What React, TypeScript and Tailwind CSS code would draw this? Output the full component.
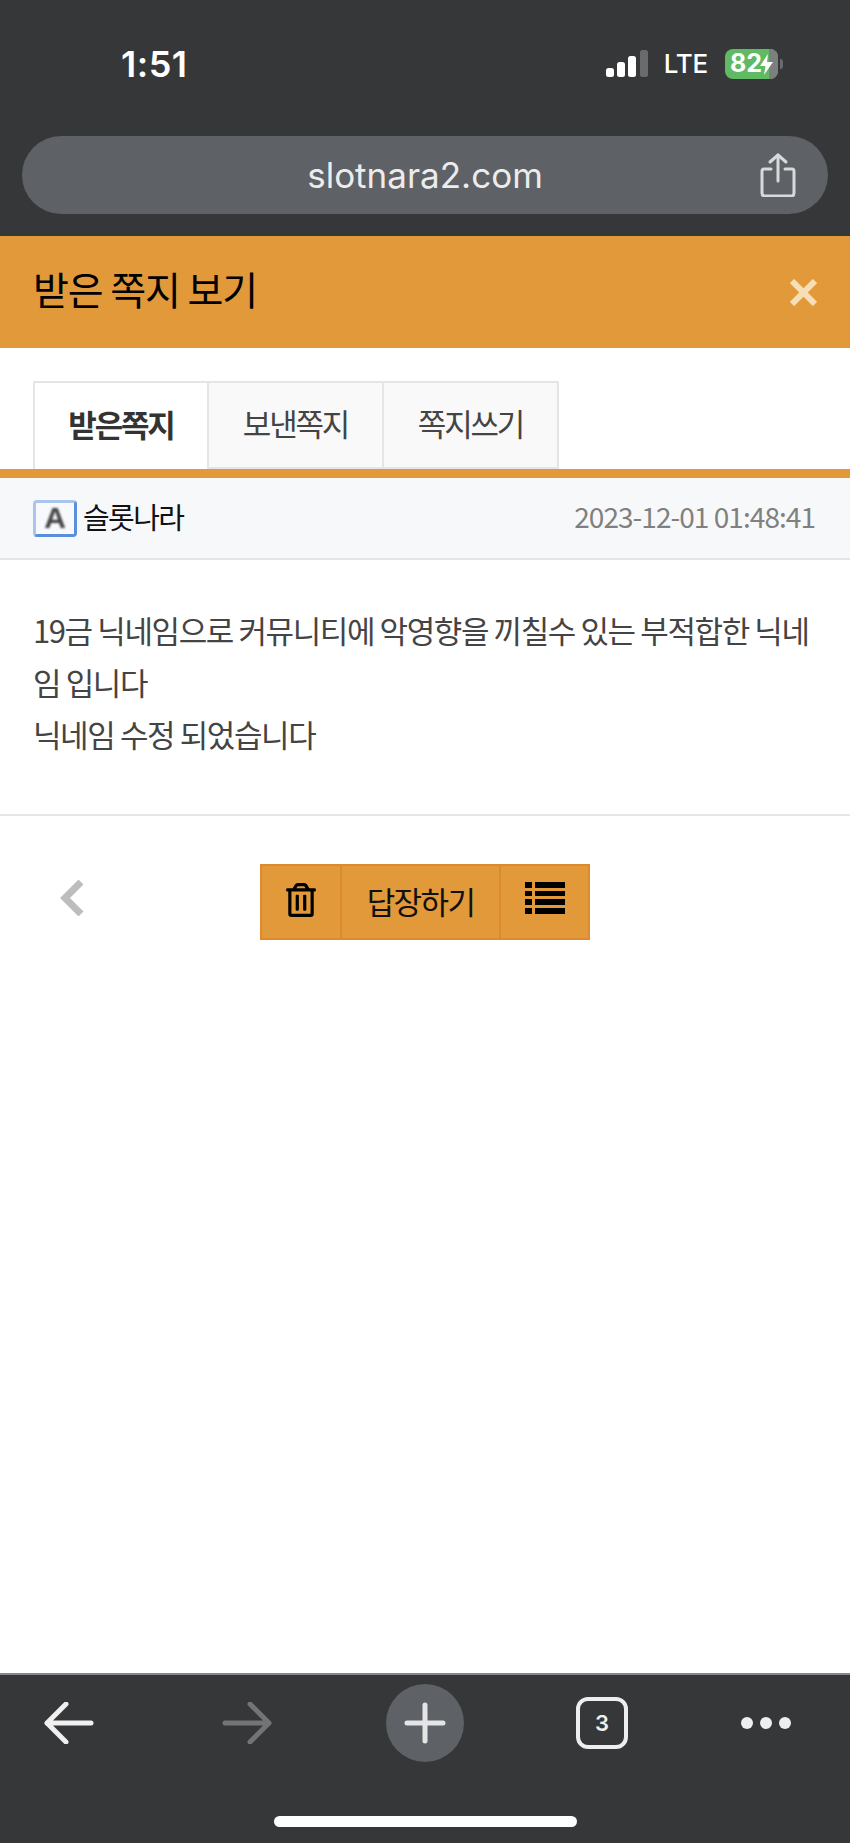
import React from 'react';
import { FaRegTrashAlt } from 'react-icons/fa';

const font = "font-['Noto_Sans_CJK_KR','Noto_Sans',sans-serif]";

const tabs = ['받은쪽지', '보낸쪽지', '쪽지쓰기'];

const StatusBar = () => (
  <div className="h-[136px] pl-[121px] pr-[67px] pb-[9px] flex items-center justify-between text-white font-['Inter',sans-serif]">
    <span className="text-[36px] font-semibold tracking-[0.5px] leading-none">1:51</span>
    <div className="flex items-center">
      <svg width="42" height="28" viewBox="0 0 42 28">
        <rect x="0" y="18" width="8" height="9" rx="2.5" fill="#fff" />
        <rect x="11" y="12" width="8" height="15" rx="2.5" fill="#fff" />
        <rect x="22" y="6" width="8" height="21" rx="2.5" fill="#fff" />
        <rect x="34" y="0" width="8" height="27" rx="2.5" fill="#6a6b6e" />
      </svg>
      <span className="ml-[16px] text-[26px] font-medium leading-none tracking-[-0.2px]">LTE</span>
      <div className="ml-[17px] relative w-[53px] h-[30px] rounded-[8px] bg-[#5fba63] overflow-hidden flex items-center pl-[5px]">
        <span className="text-[25px] font-bold leading-none">82</span>
        <div className="absolute right-0 top-0 bottom-0 w-[9px] bg-[#7d7e80]" />
        <svg className="absolute right-[5px] top-[5px]" width="13" height="21" viewBox="0 0 13 21">
          <path d="M8 0 L0 12 L5.5 12 L4 21 L13 8 L7 8 Z" fill="#fff" />
        </svg>
      </div>
      <div className="ml-[2px] w-[3px] h-[10px] rounded-r-full bg-[#6a6b6e]" />
    </div>
  </div>
);

const UrlBar = () => (
  <div className="h-[100px] px-[22px]">
    <div className="relative h-[78px] rounded-[39px] bg-[#5e6165] flex items-center justify-center">
      <span className="text-[35px] text-[#ececec] font-['Inter',sans-serif] leading-none">slotnara2.com</span>
      <svg className="absolute right-[32px] top-[17px]" width="36" height="44" viewBox="0 0 36 44" fill="none" stroke="#d8d9da" strokeWidth="3" strokeLinecap="round" strokeLinejoin="round">
        <path d="M18 2 V28" />
        <path d="M10 9 L18 2 L26 9" />
        <path d="M11 16 H4 Q2 16 2 18 V40 Q2 43 5 43 H31 Q34 43 34 40 V18 Q34 16 32 16 H25" />
      </svg>
    </div>
  </div>
);

const BottomBar = () => (
  <div className="mt-auto h-[170px] bg-[#363739] border-t-2 border-[#85868a]">
    <div className="h-[96px] pl-[44px] flex items-center">
      <svg width="50" height="42" viewBox="0 0 50 42" fill="none" stroke="#f0f0f1" strokeWidth="5" strokeLinecap="round" strokeLinejoin="round">
        <path d="M47 21 H3 M22 2 L3 21 L22 40" />
      </svg>
      <svg className="ml-[128px]" width="50" height="42" viewBox="0 0 50 42" fill="none" stroke="#737476" strokeWidth="5" strokeLinecap="round" strokeLinejoin="round">
        <path d="M3 21 H47 M28 2 L47 21 L28 40" />
      </svg>
      <div className="ml-[114px] w-[78px] h-[78px] rounded-full bg-[#5e6165] flex items-center justify-center">
        <svg width="42" height="42" viewBox="0 0 42 42" stroke="#e4e5e6" strokeWidth="5" strokeLinecap="round">
          <path d="M21 3 V39 M3 21 H39" />
        </svg>
      </div>
      <div className="ml-[112px] w-[52px] h-[52px] rounded-[12px] border-[4px] border-[#eeeeef] flex items-center justify-center text-[#eeeeef] text-[22px] font-semibold font-['Inter',sans-serif] leading-none">3</div>
      <div className="ml-[113px] flex gap-[7px]">
        <span className="w-[12px] h-[12px] rounded-full bg-[#eeeeef]" />
        <span className="w-[12px] h-[12px] rounded-full bg-[#eeeeef]" />
        <span className="w-[12px] h-[12px] rounded-full bg-[#eeeeef]" />
      </div>
    </div>
    <div className="mx-auto mt-[45px] w-[303px] h-[11px] rounded-full bg-white" />
  </div>
);

export default function App() {
  return (
    <div className={`h-screen flex flex-col bg-white overflow-hidden ${font}`}>
      <div className="bg-[#363739]">
        <StatusBar />
        <UrlBar />
      </div>

      <div className="h-[112px] bg-[#e1993a] px-[33px] pb-[8px] flex items-center justify-between">
        <h1 className="text-[39px] font-normal tracking-[-1.1px] text-black leading-none">받은 쪽지 보기</h1>
        <svg className="mt-[8px]" width="27" height="27" viewBox="0 0 27 27" stroke="#f6dfb6" strokeWidth="6">
          <path d="M2 2 L25 25 M25 2 L2 25" />
        </svg>
      </div>

      <div className="pt-[33px] px-[33px] flex">
        {tabs.map((t, i) => (
          <div
            key={t}
            className={
              i === 0
                ? 'w-[176px] h-[88px] pb-[6px] bg-white border-2 border-b-0 border-[#e5e5e5] flex items-center justify-center text-[31px] font-bold tracking-[-2.2px] text-[#333] leading-none'
                : 'w-[175px] h-[88px] pb-[6px] bg-[#f9f9f9] border-2 border-l-0 border-[#e5e5e5] flex items-center justify-center text-[31px] tracking-[-2.2px] text-[#444] leading-none'
            }
          >
            {t}
          </div>
        ))}
      </div>

      <div className="h-[9px] bg-[#e1993a]" />

      <div className="h-[82px] bg-[#f7f8fa] border-b-2 border-[#e3e5e8] pl-[33px] pr-[35px] pb-[4px] flex items-center justify-between">
        <div className="flex items-center">
          <div className="w-[44px] h-[37px] mt-[4px] rounded-[4px] bg-[#f8f9fc] border-[3px] border-[#5b8fdc] border-t-[#a9c5ee] border-l-[#a9c5ee] flex items-center justify-center blur-[0.5px]">
            <span className="text-[#444] text-[30px] font-bold leading-none blur-[1px] font-['Liberation_Sans',sans-serif]">A</span>
          </div>
          <span className="ml-[6px] text-[29px] tracking-[-1.6px] text-[#111] leading-none">슬롯나라</span>
        </div>
        <span className="text-[28px] text-[#808080] tracking-[-0.95px] leading-none">2023-12-01 01:48:41</span>
      </div>

      <div className="h-[256px] border-b-2 border-[#e3e7ea] pt-[44px] px-[33px] text-[31px] leading-[52px] tracking-[-1.4px] text-[#444]">
        <p>19금 닉네임으로 커뮤니티에 악영향을 끼칠수 있는 부적합한 닉네임 입니다</p>
        <p>닉네임 수정 되었습니다</p>
      </div>

      <div className="relative pt-[48px] flex justify-center">
        <svg className="absolute left-[60px] top-[64px]" width="24" height="36" viewBox="0 0 24 36" fill="none" stroke="#bdbdbd" strokeWidth="7" strokeLinejoin="miter">
          <path d="M21 2 L5 18 L21 34" />
        </svg>
        <div className="flex w-[330px] h-[76px] border-2 border-[#dd8a2e] bg-[#e1993a] text-[#111]">
          <div className="w-[80px] pb-[4px] border-r-2 border-[#dd8a2e] flex items-center justify-center">
            <FaRegTrashAlt size={34} color="#000" />
          </div>
          <div className="w-[159px] pb-[4px] border-r-2 border-[#dd8a2e] flex items-center justify-center text-[31px] tracking-[-1.6px] leading-none">답장하기</div>
          <div className="flex-1 flex items-center justify-center pb-[8px]">
            <svg width="40" height="32" viewBox="0 0 40 32" fill="#000">
              <rect x="0" y="0" width="7" height="6" />
              <rect x="10" y="0" width="30" height="6" />
              <rect x="0" y="9" width="7" height="5" />
              <rect x="10" y="9" width="30" height="5" />
              <rect x="0" y="17" width="7" height="6" />
              <rect x="10" y="17" width="30" height="6" />
              <rect x="0" y="26" width="7" height="6" />
              <rect x="10" y="26" width="30" height="6" />
            </svg>
          </div>
        </div>
      </div>

      <BottomBar />
    </div>
  );
}
